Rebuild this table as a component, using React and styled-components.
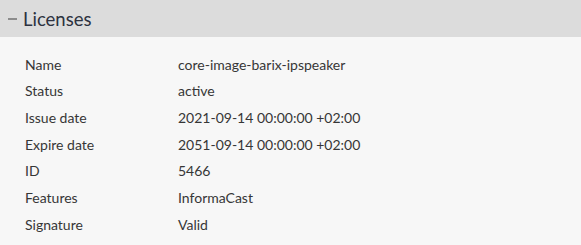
import React from "react";
import styled, { createGlobalStyle } from "styled-components";

const Global = createGlobalStyle`
  html, body { margin: 0; padding: 0; background: #f7f7f7; }
  body { font-family: Lato, "Liberation Sans", sans-serif; }
`;

const Panel = styled.section`
  width: 581px;
  height: 245px;
  background: #f7f7f7;
  display: flex;
  flex-direction: column;
`;

const Header = styled.header`
  height: 37px;
  background: #dcdcdc;
  display: flex;
  align-items: center;
  padding-left: 8px;
  gap: 6px;
  box-sizing: border-box;
`;

const Toggle = styled.span`
  width: 9px;
  height: 2px;
  background: #8c8c8c;
  margin-top: 1px;
`;

const Title = styled.h2`
  margin: 0;
  font-size: 18.5px;
  font-weight: 400;
  color: #2d3240;
`;

const Table = styled.dl`
  margin: 0;
  padding: 14px 0 0 25px;
  display: grid;
  grid-template-columns: 153px 1fr;
  grid-auto-rows: 26.67px;
  align-items: center;
  font-size: 14px;
  color: #363636;
`;

const Term = styled.dt`
  margin: 0;
`;

const Value = styled.dd`
  margin: 0;
`;

const rows = [
  ["Name", "core-image-barix-ipspeaker"],
  ["Status", "active"],
  ["Issue date", "2021-09-14 00:00:00 +02:00"],
  ["Expire date", "2051-09-14 00:00:00 +02:00"],
  ["ID", "5466"],
  ["Features", "InformaCast"],
  ["Signature", "Valid"],
];

export default function App() {
  return (
    <>
      <Global />
      <Panel>
        <Header>
          <Toggle />
          <Title>Licenses</Title>
        </Header>
        <Table>
          {rows.map(([k, v]) => (
            <React.Fragment key={k}>
              <Term>{k}</Term>
              <Value>{v}</Value>
            </React.Fragment>
          ))}
        </Table>
      </Panel>
    </>
  );
}
